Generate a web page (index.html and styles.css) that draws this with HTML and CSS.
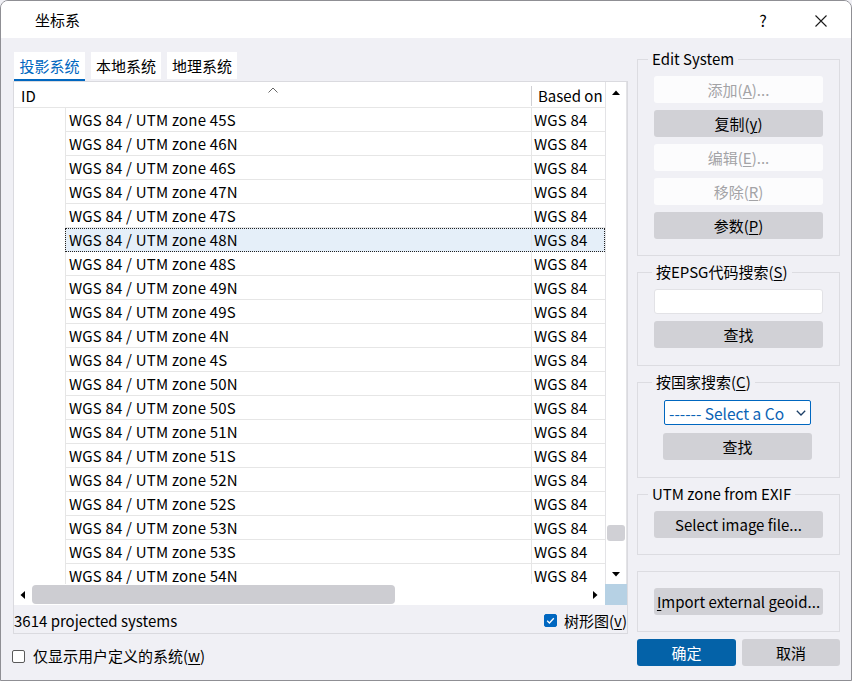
FILE: index.html
```html
<!DOCTYPE html>
<html lang="zh-CN">
<head>
<meta charset="utf-8">
<title>坐标系</title>
<link rel="stylesheet" href="styles.css">
</head>
<body>
<div class="window">
  <div class="titlebar">
    <span class="title">坐标系</span>
    <span class="help">?</span>
    <span class="close"><svg width="12" height="12" viewBox="0 0 12 12"><path d="M0.5 0.5 L11.5 11.5 M11.5 0.5 L0.5 11.5" stroke="#1a1a1a" stroke-width="1.1" fill="none"/></svg></span>
  </div>
  <div class="main">
    <div class="left">
      <div class="tabs">
        <div class="tab active">投影系统</div>
        <div class="tab">本地系统</div>
        <div class="tab">地理系统</div>
      </div>
      <div class="panel">
        <div class="tree">
          <div class="tree-top">
            <div class="viewport">
              <div class="header">
                <div class="h-id">ID<svg class="caret" width="10" height="6" viewBox="0 0 10 6"><path d="M0.5 5.5 L5 1 L9.5 5.5" stroke="#666" stroke-width="1" fill="none"/></svg></div>
                <div class="h-base">Based on</div>
              </div>
              <div class="rows">
                <div class="row"><div class="c-id"></div><div class="c-name">WGS 84 / UTM zone 45S</div><div class="c-base">WGS 84</div></div>
                <div class="row"><div class="c-id"></div><div class="c-name">WGS 84 / UTM zone 46N</div><div class="c-base">WGS 84</div></div>
                <div class="row"><div class="c-id"></div><div class="c-name">WGS 84 / UTM zone 46S</div><div class="c-base">WGS 84</div></div>
                <div class="row"><div class="c-id"></div><div class="c-name">WGS 84 / UTM zone 47N</div><div class="c-base">WGS 84</div></div>
                <div class="row"><div class="c-id"></div><div class="c-name">WGS 84 / UTM zone 47S</div><div class="c-base">WGS 84</div></div>
                <div class="row selected"><div class="c-id"></div><div class="sel"><div class="c-name">WGS 84 / UTM zone 48N</div><div class="c-base">WGS 84</div></div></div>
                <div class="row"><div class="c-id"></div><div class="c-name">WGS 84 / UTM zone 48S</div><div class="c-base">WGS 84</div></div>
                <div class="row"><div class="c-id"></div><div class="c-name">WGS 84 / UTM zone 49N</div><div class="c-base">WGS 84</div></div>
                <div class="row"><div class="c-id"></div><div class="c-name">WGS 84 / UTM zone 49S</div><div class="c-base">WGS 84</div></div>
                <div class="row"><div class="c-id"></div><div class="c-name">WGS 84 / UTM zone 4N</div><div class="c-base">WGS 84</div></div>
                <div class="row"><div class="c-id"></div><div class="c-name">WGS 84 / UTM zone 4S</div><div class="c-base">WGS 84</div></div>
                <div class="row"><div class="c-id"></div><div class="c-name">WGS 84 / UTM zone 50N</div><div class="c-base">WGS 84</div></div>
                <div class="row"><div class="c-id"></div><div class="c-name">WGS 84 / UTM zone 50S</div><div class="c-base">WGS 84</div></div>
                <div class="row"><div class="c-id"></div><div class="c-name">WGS 84 / UTM zone 51N</div><div class="c-base">WGS 84</div></div>
                <div class="row"><div class="c-id"></div><div class="c-name">WGS 84 / UTM zone 51S</div><div class="c-base">WGS 84</div></div>
                <div class="row"><div class="c-id"></div><div class="c-name">WGS 84 / UTM zone 52N</div><div class="c-base">WGS 84</div></div>
                <div class="row"><div class="c-id"></div><div class="c-name">WGS 84 / UTM zone 52S</div><div class="c-base">WGS 84</div></div>
                <div class="row"><div class="c-id"></div><div class="c-name">WGS 84 / UTM zone 53N</div><div class="c-base">WGS 84</div></div>
                <div class="row"><div class="c-id"></div><div class="c-name">WGS 84 / UTM zone 53S</div><div class="c-base">WGS 84</div></div>
                <div class="row"><div class="c-id"></div><div class="c-name">WGS 84 / UTM zone 54N</div><div class="c-base">WGS 84</div></div>
              </div>
            </div>
            <div class="vscroll">
              <svg class="arrow-up" width="8" height="5" viewBox="0 0 8 5"><path d="M0 5 L4 0.5 L8 5 Z" fill="#000"/></svg>
              <div class="vthumb"></div>
              <svg class="arrow-down" width="8" height="5" viewBox="0 0 8 5"><path d="M0 0 L4 4.5 L8 0 Z" fill="#000"/></svg>
            </div>
          </div>
          <div class="tree-bottom">
            <div class="hscroll">
              <svg class="arrow-left" width="5" height="8" viewBox="0 0 5 8"><path d="M5 0 L0.5 4 L5 8 Z" fill="#000"/></svg>
              <div class="hthumb"></div>
              <svg class="arrow-right" width="5" height="8" viewBox="0 0 5 8"><path d="M0 0 L4.5 4 L0 8 Z" fill="#000"/></svg>
            </div>
            <div class="corner"></div>
          </div>
        </div>
        <div class="status">
          <span>3614 projected systems</span>
          <label class="check-label"><span class="checkbox checked"><svg width="13" height="13" viewBox="0 0 13 13"><path d="M3.2 6.8 L5.4 9 L9.8 4.2" stroke="#fff" stroke-width="1.3" fill="none"/></svg></span><span>树形图(<u>v</u>)</span></label>
        </div>
      </div>
      <label class="user-defined"><span class="checkbox"></span><span>仅显示用户定义的系统(<u>w</u>)</span></label>
    </div>
    <div class="right">
      <fieldset class="group edit">
        <legend>Edit System</legend>
        <div class="btn disabled">添加(<u>A</u>)...</div>
        <div class="btn">复制(<u>y</u>)</div>
        <div class="btn disabled">编辑(<u>E</u>)...</div>
        <div class="btn disabled">移除(<u>R</u>)</div>
        <div class="btn">参数(<u>P</u>)</div>
      </fieldset>
      <fieldset class="group epsg">
        <legend>按EPSG代码搜索(<u>S</u>)</legend>
        <div class="input"></div>
        <div class="btn">查找</div>
      </fieldset>
      <fieldset class="group country">
        <legend>按国家搜索(<u>C</u>)</legend>
        <div class="select"><span class="select-text">------ Select a Country ------</span><svg class="chev" width="10" height="6" viewBox="0 0 10 6"><path d="M0.8 0.8 L5 5 L9.2 0.8" stroke="#1c3f66" stroke-width="1.3" fill="none"/></svg></div>
        <div class="btn">查找</div>
      </fieldset>
      <fieldset class="group utm">
        <legend>UTM zone from EXIF</legend>
        <div class="btn">Select image file...</div>
      </fieldset>
      <fieldset class="group geoid">
        <div class="btn"><u>I</u>mport external geoid...</div>
      </fieldset>
      <div class="actions">
        <div class="btn primary">确定</div>
        <div class="btn cancel">取消</div>
      </div>
    </div>
  </div>
</div>
</body>
</html>
```
FILE: styles.css
```css
* { box-sizing: border-box; }
html, body { margin: 0; padding: 0; }
body {
  width: 852px;
  height: 681px;
  overflow: hidden;
  background: #f0f0f5;
  font-family: "Noto Sans CJK SC", "Noto Sans", sans-serif;
  font-size: 15px;
  color: #000;
}
u { text-decoration: underline; text-underline-offset: 2px; text-decoration-thickness: 1px; }

.window {
  width: 852px;
  height: 681px;
  border: 1px solid #8f8f94;
  border-radius: 8px 8px 0 0;
  overflow: hidden;
  background: #f0f0f5;
  display: flex;
  flex-direction: column;
}

.titlebar {
  height: 37px;
  flex: none;
  background: #fff;
  display: flex;
  align-items: center;
  padding-left: 34px;
}
.title { font-size: 15px; line-height: 20px; flex: 1; margin-top: 1px; }
.help { font-size: 16px; line-height: 20px; width: 20px; text-align: center; margin-right: 42px; margin-top: 1px; }
.close { width: 12px; height: 12px; display: flex; margin-right: 24px; margin-top: 2px; }

.main {
  flex: 1;
  display: grid;
  grid-template-columns: 615px 203px;
  column-gap: 9px;
  padding-left: 12px;
}

/* LEFT */
.left { padding-top: 14px; display: flex; flex-direction: column; }
.tabs { display: flex; gap: 6px; height: 29px; padding-left: 1px; }
.tab {
  width: 70px;
  height: 27px;
  background: #fff;
  text-align: center;
  line-height: 28px;
  font-size: 15px;
}
.tab.active {
  width: 71px;
  height: 29px;
  color: #0067c0;
  border-bottom: 2px solid #0067c0;
}

.panel {
  width: 615px;
  height: 553px;
  border: 1px solid #dadadf;
  display: flex;
  flex-direction: column;
}
.tree { background: #fff; height: 523px; display: flex; flex-direction: column; }
.tree-top { display: flex; height: 502px; }
.viewport { width: 591px; height: 502px; overflow: hidden; }

.header { display: flex; height: 26px; border-bottom: 1px solid #e6e6e6; align-items: center; padding-top: 2px; }
.h-id { width: 517px; height: 24px; padding-left: 7px; line-height: 24px; position: relative; }
.caret { position: absolute; left: 254px; top: 3px; }
.h-base { flex: 1; padding-left: 6px; border-left: 1px solid #d0d0d4; height: 20px; line-height: 20px; }

.rows { display: flex; flex-direction: column; }
.row { display: flex; height: 24px; flex: none; }
.c-id { width: 51px; flex: none; }
.c-name {
  width: 466px;
  flex: none;
  border-left: 1px solid #e6e6e6;
  border-bottom: 1px solid #e6e6e6;
  padding-left: 3px;
  line-height: 23px;
  white-space: nowrap;
  letter-spacing: 0.2px;
}
.c-base {
  width: 74px;
  flex: none;
  border-left: 1px solid #e6e6e6;
  border-bottom: 1px solid #e6e6e6;
  padding-left: 2px;
  line-height: 23px;
  white-space: nowrap;
  overflow: hidden;
  letter-spacing: 0.2px;
}
.sel { display: flex; background: #e5eff9; outline: 1px dotted #222; outline-offset: -1px; }
.sel .c-name, .sel .c-base { border-bottom-color: transparent; }

.vscroll {
  width: 22px;
  height: 502px;
  border-left: 1px solid #e3e3e6;
  border-right: 1px solid #e3e3e6;
  background: #fff;
  display: flex;
  flex-direction: column;
  align-items: center;
}
.arrow-up { margin-top: 8px; flex: none; }
.vthumb { width: 18px; height: 16px; background: #d0d0d5; border-radius: 3px; margin-top: 430px; flex: none; }
.arrow-down { margin-top: 31px; flex: none; }

.tree-bottom { display: flex; height: 21px; }
.hscroll {
  width: 591px;
  height: 21px;
  background: #fff;
  display: flex;
  align-items: center;
  padding-left: 6px;
}
.hthumb { width: 363px; height: 19px; background: #cdcdd2; border-radius: 4px; margin-left: 7px; }
.arrow-right { margin-left: 198px; }
.corner { width: 22px; height: 21px; background: #b6d1e4; }

.status {
  flex: 1;
  display: flex;
  align-items: center;
  justify-content: space-between;
  padding-top: 3px;
  line-height: 20px;
}
.check-label { display: flex; align-items: center; gap: 7px; }
.checkbox {
  width: 13px;
  height: 13px;
  border: 1px solid #5a5a5a;
  border-radius: 2px;
  background: #fff;
  display: inline-flex;
  flex: none;
}
.checkbox.checked { background: #0067c0; border-color: #0067c0; }
.checkbox.checked svg { margin: -1px; }

.user-defined { display: flex; align-items: center; gap: 8px; margin-top: 12px; margin-left: -1px; line-height: 20px; }

/* RIGHT */
.right { padding-top: 11px; display: flex; flex-direction: column; }
.group {
  margin: 0;
  border: 1px solid #dcdce1;
  padding: 7px 16px 16px 16px;
  min-width: 0;
  width: 203px;
  display: flex;
  flex-direction: column;
}
.group legend {
  padding: 0 4px;
  margin-left: -6px;
  font-size: 15px;
  line-height: 20px;
  height: 20px;
}
.btn {
  height: 27px;
  border-radius: 3px;
  background: #d1d1d6;
  text-align: center;
  line-height: 27px;
  font-size: 15px;
  white-space: nowrap;
  flex: none;
}
.btn.disabled { background: #fcfcfd; color: #a3a3a6; }
.edit { gap: 7px; }
.epsg { margin-top: 6px; gap: 7px; padding-bottom: 17px; }
.epsg legend { margin-left: -2px; }
.input { height: 25px; background: #fff; border: 1px solid #e2e2e6; border-radius: 3px; }
.country { margin-top: 6px; padding: 8px 27px 17px 25px; gap: 8px; }
.country legend { margin-left: -11px; }
.select {
  height: 25px;
  border: 1px solid #0067c0;
  border-radius: 2px;
  background: #fff;
  display: flex;
  align-items: center;
  padding-left: 4px;
  padding-right: 4px;
  margin-left: 1px;
  margin-right: 1px;
}
.select-text { width: 115px; overflow: hidden; white-space: nowrap; color: #0a63b5; flex: none; font-size: 15.5px; }
.chev { margin-left: auto; margin-right: 0; }
.utm { margin-top: 6px; }
.geoid { margin-top: 16px; padding-top: 16px; }
.actions { margin-top: 7px; display: flex; gap: 6px; }
.primary { width: 99px; background: #0462a8; color: #fff; }
.cancel { width: 98px; }
```
